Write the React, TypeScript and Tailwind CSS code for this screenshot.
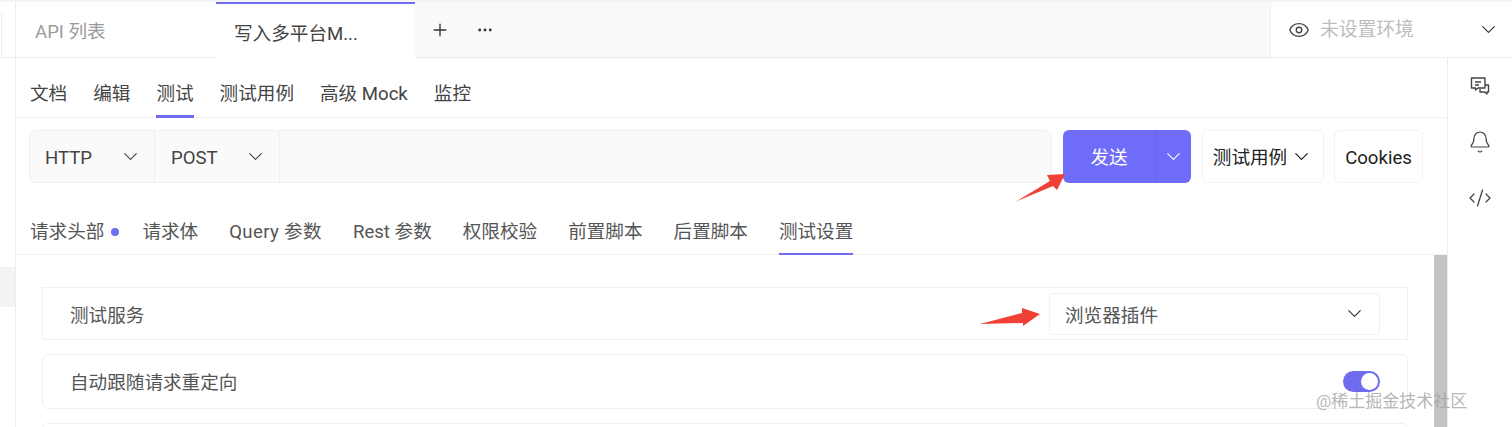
import React from "react";
import { ChevronDown, Eye, Plus, Ellipsis, Bell, CodeXml } from "lucide-react";

const font = "font-['Roboto','Noto_Sans_CJK_SC',sans-serif]";

// ==========================================
// TABS
// ==========================================
const DocTabs = () => {
  const items = ["文档", "编辑", "测试", "测试用例", "高级 Mock", "监控"];
  return (
    <div className="flex h-[60px] gap-[26px] border-b border-[#f0f0f0] pl-[14px] shrink-0">
      {items.map((t) => (
        <div key={t} className="relative flex items-center pt-[14px] text-[18.6px] text-[#444]">
          {t}
          {t === "测试" && <div className="absolute bottom-[-1px] left-0 right-0 h-[3px] bg-[#6f6cf0]" />}
        </div>
      ))}
    </div>
  );
};

const ReqTabs = () => {
  const items = ["请求头部", "请求体", "Query 参数", "Rest 参数", "权限校验", "前置脚本", "后置脚本", "测试设置"];
  return (
    <div className="mt-[14px] flex h-[58px] gap-[31px] border-b border-[#f0f0f0] pl-[14px] shrink-0">
      {items.map((t) => (
        <div
          key={t}
          className={`relative flex items-center pt-[15px] text-[18.6px] text-[#555] ${
            t === "请求头部" ? "mr-[7px]" : t === "Query 参数" ? "tracking-[0.35px]" : ""
          }`}
        >
          {t}
          {t === "请求头部" && (
            <span className="absolute right-[-15px] top-[31px] h-[8px] w-[8px] rounded-full bg-[#6f6cf0]" />
          )}
          {t === "测试设置" && <div className="absolute bottom-[-1px] left-0 right-0 h-[2px] bg-[#6f6cf0]" />}
        </div>
      ))}
    </div>
  );
};

// ==========================================
// ARROWS
// ==========================================
const ArrowA = () => (
  <svg className="absolute left-[1014px] top-[170px]" width="52" height="34" viewBox="0 0 52 34">
    <path d="M1 32 L36 11 L33 5 L51 4 L43 20 L39 16 Z" fill="#ef4136" />
  </svg>
);

const ArrowB = () => (
  <svg className="absolute left-[978px] top-[304px]" width="64" height="24" viewBox="0 0 64 24">
    <path d="M2 20 L44 9 L44 4 L62 10 L45 22 L45 19 Z" fill="#ef4136" />
  </svg>
);

// ==========================================
// APP
// ==========================================
export default function App() {
  return (
    <div className={`relative flex h-[427px] w-[1512px] flex-col overflow-hidden bg-white ${font}`}>
      {/* Top tab bar */}
      <div className="flex h-[58px] shrink-0 border-b border-[#ececec] border-t-2 border-t-[#f4f4f4]">
        <div className="flex w-[16px] shrink-0 border-r border-[#ececec] bg-white">
          <div className="mt-[12px] h-[42px] w-[2px] rounded-r border-r border-y border-[#ececec]" />
        </div>
        <div className="flex w-[200px] items-center pl-[19px] pt-[7px] text-[18.6px] text-[#9b9b9b]">API 列表</div>
        <div className="relative z-10 mb-[-1px] flex w-[199px] items-center border-t-2 border-[#6f6cf0] bg-white pl-[18px] pt-[7px] text-[18.6px] text-[#444]">
          写入多平台M...
        </div>
        <div className="flex flex-1 items-center gap-[26px] bg-[#f9f9f9] pl-[15px] text-[#333]">
          <Plus size={20} strokeWidth={1.6} />
          <Ellipsis size={18} strokeWidth={1.8} />
        </div>
        <div className="flex w-[242px] items-center border-l border-[#efefef] pl-[17px] pr-[12px] text-[18.8px] text-[#bdbdbd]">
          <Eye size={22} strokeWidth={1.5} className="mr-[10px] text-[#444]" />
          <span className="pt-[2px]">未设置环境</span>
          <ChevronDown size={23} strokeWidth={1.2} className="ml-auto text-[#333]" />
        </div>
      </div>

      <div className="flex min-h-0 flex-1">
        {/* Left edge */}
        <div className="w-[16px] shrink-0 border-r border-[#ececec] pt-[209px]">
          <div className="h-[40px] w-full bg-[#f3f3f3]" />
        </div>

        {/* Main */}
        <div className="flex min-w-0 flex-1 flex-col">
          <DocTabs />

          {/* Request row */}
          <div className="mt-[12px] flex h-[53px] shrink-0 pl-[13px] pr-[24px] text-[18.6px]">
            <div className="flex flex-1 rounded-[6px] border border-[#f0f0f0] bg-[#fafafa] text-[#444]">
              <div className="flex w-[125px] items-center justify-between border-r border-[#efefef] pl-[15px] pr-[12px]">
                <span className="pt-[4px]">HTTP</span>
                <ChevronDown size={23} strokeWidth={1.2} />
              </div>
              <div className="flex w-[125px] items-center justify-between border-r border-[#efefef] pl-[16px] pr-[12px]">
                <span className="pt-[4px]">POST</span>
                <ChevronDown size={23} strokeWidth={1.2} />
              </div>
            </div>
            <div className="ml-[11px] flex w-[128px] overflow-hidden rounded-[6px] bg-[#6f6cf9] text-white">
              <div className="flex flex-1 items-center justify-center pt-[4px]">发送</div>
              <div className="flex w-[36px] items-center justify-center border-l border-[#6663e4]">
                <ChevronDown size={23} strokeWidth={1.2} />
              </div>
            </div>
            <div className="ml-[11px] flex w-[122px] items-center justify-center gap-[3px] rounded-[6px] border border-[#f2f2f2] text-[#222]">
              <span className="pt-[4px]">测试用例</span>
              <ChevronDown size={23} strokeWidth={1.3} />
            </div>
            <div className="ml-[10px] flex w-[89px] items-center justify-center rounded-[6px] border border-[#f2f2f2] pt-[4px] text-[#222]">
              Cookies
            </div>
          </div>

          <ReqTabs />

          {/* Settings */}
          <div className="flex min-h-0 flex-1 overflow-hidden">
            <div className="flex min-w-0 flex-1 flex-col gap-[14px] pl-[26px] pr-[26px] pt-[32px] text-[18.6px] text-[#555]">
              <div className="flex h-[53px] shrink-0 items-center justify-between border border-[#f2f2f2] pl-[27px] pr-[27px]">
                <span className="pt-[6px]">测试服务</span>
                <div className="flex h-[42px] w-[331px] items-center justify-between rounded-[4px] border border-[#f0f0f0] pl-[15px] pr-[13px] text-[#555]">
                  <span className="pt-[6px]">浏览器插件</span>
                  <ChevronDown size={23} strokeWidth={1.2} className="text-[#333]" />
                </div>
              </div>
              <div className="flex h-[55px] shrink-0 items-center justify-between rounded-[6px] border border-[#f0f0f0] pl-[27px] pr-[27px]">
                <span className="pt-[4px]">自动跟随请求重定向</span>
                <div className="flex h-[21px] w-[37px] items-center justify-end rounded-full bg-[#6f6cf0] pr-[2px]">
                  <div className="h-[17px] w-[17px] rounded-full bg-white" />
                </div>
              </div>
              <div className="h-[40px] shrink-0 rounded-[6px] border border-[#f0f0f0]" />
            </div>
            <div className="w-[13px] shrink-0 bg-[#c4c4c4]" />
          </div>
        </div>

        {/* Right rail */}
        <div className="flex w-[65px] shrink-0 flex-col items-center border-l border-[#ececec] pt-[18px] text-[#444]">
          <svg width="20" height="20" viewBox="0 0 20 20" fill="none" stroke="currentColor" strokeWidth="1.4" strokeLinejoin="round">
            <path d="M1.5 2 H15 V12 H8 L5.5 14 V12 H1.5 Z" />
            <path d="M5 6 H11 M5 9 H9" />
            <path d="M15 9 H18.5 V16 H17 V18 L14.5 16 H10 V13" />
          </svg>
          <Bell size={24} strokeWidth={1.2} className="mt-[34px]" />
          <CodeXml size={24} strokeWidth={1.3} className="mt-[32px]" />
        </div>
      </div>

      <ArrowA />
      <ArrowB />

      {/* Watermark */}
      <div className="absolute left-[1316px] top-[391px] text-[17px] leading-[20px] text-[#a3a3a3]/80">
        @稀土掘金技术社区
      </div>
    </div>
  );
}
